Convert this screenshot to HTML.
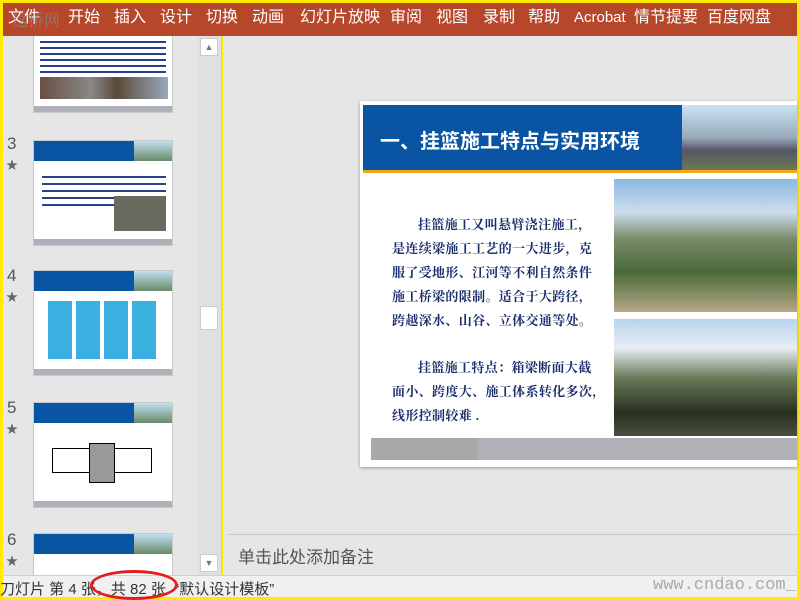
<!DOCTYPE html><html><head><meta charset="utf-8"><style>
*{margin:0;padding:0;box-sizing:border-box}
body{width:800px;height:600px;overflow:hidden;background:#ffeb00;position:relative;font-family:"Liberation Sans","Noto Sans CJK SC",sans-serif}
.a{position:absolute}
.menu{left:3px;top:3px;width:794px;height:33px;background:#b7472a;color:#fff;font-size:16px;}
.menu span{position:absolute;top:5px;line-height:20px}
.th{position:absolute;left:33px;width:140px;background:#fff;border:1px solid #c8c8c8}
.thh{position:absolute;left:0;top:0;width:100%;height:20px;background:#0a55a3}
.thi{position:absolute;right:0;top:0;width:38px;height:20px;background:linear-gradient(#bfe0f0,#6a8a6a)}
.thb{position:absolute;left:0;bottom:0;width:100%;height:6px;background:#b0b0b8}
.num{position:absolute;left:4px;font-size:17px;color:#555}
.star{position:absolute;left:3px;font-size:12px;color:#666}
.txt{font-family:"Liberation Serif","Noto Serif CJK SC",serif;font-weight:bold;color:#1b2e6c;font-size:13px;letter-spacing:0.35px;position:absolute;left:392px;white-space:nowrap}
</style></head><body>
<div class="a menu">
<span style="left:5px">文件</span><span style="left:65px">开始</span><span style="left:111px">插入</span><span style="left:157px">设计</span><span style="left:203px">切换</span><span style="left:249px">动画</span><span style="left:297px">幻灯片放映</span><span style="left:387px">审阅</span><span style="left:433px">视图</span><span style="left:480px">录制</span><span style="left:525px">帮助</span><span style="left:571px;font-size:15px">Acrobat</span><span style="left:631px">情节提要</span><span style="left:704px">百度网盘</span>
</div>
<div class="a" style="left:12px;top:8px;color:#888;font-size:16px;font-family:'Noto Serif CJK SC',serif;opacity:.8">这桥网</div>
<div class="a" style="left:3px;top:36px;width:195px;height:539px;background:#e6e6e6;overflow:hidden">
 <div class="th" style="top:-10px;height:87px;left:30px">
  <div class="a" style="left:6px;top:10px;width:126px;height:38px;background:repeating-linear-gradient(#fff 0 4px,#2a3f8a 4px 6px)"></div>
  <div class="a" style="left:6px;top:50px;width:128px;height:22px;background:linear-gradient(90deg,#6a5040,#888 40%,#5a4a3a 60%,#9ab)"></div>
  <div class="thb"></div></div>
 <div class="num" style="top:98px">3</div><div class="star" style="top:120px">★</div>
 <div class="th" style="top:104px;height:106px;left:30px"><div class="thh"></div><div class="thi"></div>
  <div class="a" style="left:8px;top:30px;width:124px;height:40px;background:repeating-linear-gradient(#fff 0 5px,#2a3f8a 5px 7px)"></div>
  <div class="a" style="left:80px;top:55px;width:52px;height:35px;background:#6a6a60"></div><div class="thb"></div></div>
 <div class="num" style="top:230px">4</div><div class="star" style="top:252px">★</div>
 <div class="th" style="top:234px;height:106px;left:30px"><div class="thh"></div><div class="thi"></div>
  <div class="a" style="left:14px;top:30px;width:110px;height:58px;background:repeating-linear-gradient(90deg,#3ab0e0 0 24px,#fff 24px 28px)"></div><div class="thb"></div></div>
 <div class="num" style="top:362px">5</div><div class="star" style="top:384px">★</div>
 <div class="th" style="top:366px;height:106px;left:30px"><div class="thh"></div><div class="thi"></div>
  <div class="a" style="left:18px;top:45px;width:100px;height:25px;border:1px solid #000"></div>
  <div class="a" style="left:55px;top:40px;width:26px;height:40px;background:#999;border:1px solid #000"></div><div class="thb"></div></div>
 <div class="num" style="top:494px">6</div><div class="star" style="top:516px">★</div>
 <div class="th" style="top:497px;height:60px;left:30px"><div class="thh"></div><div class="thi"></div></div>
</div>
<div class="a" style="left:198px;top:36px;width:24px;height:539px;background:#e0e0e0;border-right:1px solid #ccc">
 <div class="a" style="left:2px;top:2px;width:18px;height:18px;background:#fff;border:1px solid #ccc;font-size:9px;color:#777;text-align:center;line-height:16px">▲</div>
 <div class="a" style="left:2px;top:270px;width:18px;height:24px;background:#fff;border:1px solid #ccc"></div>
 <div class="a" style="left:2px;top:518px;width:18px;height:18px;background:#fff;border:1px solid #ccc;font-size:9px;color:#777;text-align:center;line-height:16px">▼</div>
</div>
<div class="a" style="left:223px;top:36px;width:574px;height:539px;background:#e6e6e6"></div>
<div class="a" style="left:228px;top:534px;width:569px;height:1px;background:#c8c8c8"></div>
<div class="a" style="left:238px;top:543px;font-size:17px;color:#555">单击此处添加备注</div>
<div class="a" style="left:360px;top:101px;width:437px;height:366px;background:#fff;box-shadow:0 1px 3px #999"></div>
<div class="a" style="left:363px;top:105px;width:320px;height:65px;background:#0a55a3"></div>
<div class="a" style="left:682px;top:105px;width:115px;height:65px;background:linear-gradient(#c8e4f2,#9ab 50%,#556 70%,#6a7a50)"></div>
<div class="a" style="left:363px;top:170px;width:434px;height:3px;background:#f2a818"></div>
<div class="a" style="left:380px;top:125px;font-size:20px;font-weight:bold;color:#fff">一、挂篮施工特点与实用环境</div>
<div class="a" style="left:614px;top:179px;width:183px;height:133px;background:linear-gradient(#8cb8e0,#cde 25%,#7a8a6a 45%,#4a6a3a 70%,#b8a888)"></div>
<div class="a" style="left:614px;top:319px;width:183px;height:117px;background:linear-gradient(#b8d4ee,#e8eef4 25%,#6a7a5a 50%,#2a3020 80%,#4a5040)"></div>
<div class="txt" style="top:214px;left:418px">挂篮施工又叫悬臂浇注施工，</div>
<div class="txt" style="top:238px">是连续梁施工工艺的一大进步，克</div>
<div class="txt" style="top:262px">服了受地形、江河等不利自然条件</div>
<div class="txt" style="top:286px">施工桥梁的限制。适合于大跨径，</div>
<div class="txt" style="top:310px">跨越深水、山谷、立体交通等处。</div>
<div class="txt" style="top:357px;left:418px">挂篮施工特点：箱梁断面大截</div>
<div class="txt" style="top:381px">面小、跨度大、施工体系转化多次，</div>
<div class="txt" style="top:405px">线形控制较难 .</div>
<div class="a" style="left:371px;top:438px;width:426px;height:22px;background:#b0b0b8"></div>
<div class="a" style="left:371px;top:438px;width:107px;height:22px;background:#a8a8a8"></div>
<div class="a" style="left:3px;top:575px;width:794px;height:22px;background:#f0f0f0;border-top:1px solid #d0d0d0;font-size:15px;color:#333">
 <span class="a" style="left:-3px;top:2px;white-space:nowrap">刀灯片 第 4 张，共 82 张 &nbsp;“默认设计模板”</span>
 <span class="a" style="left:650px;top:0;font-size:17px;color:#aaa;font-family:'Liberation Mono',monospace">www.cndao.com_</span>
</div>
<div class="a" style="left:90px;top:570px;width:88px;height:30px;border:3px solid #e02020;border-radius:50%"></div>
</body></html>
